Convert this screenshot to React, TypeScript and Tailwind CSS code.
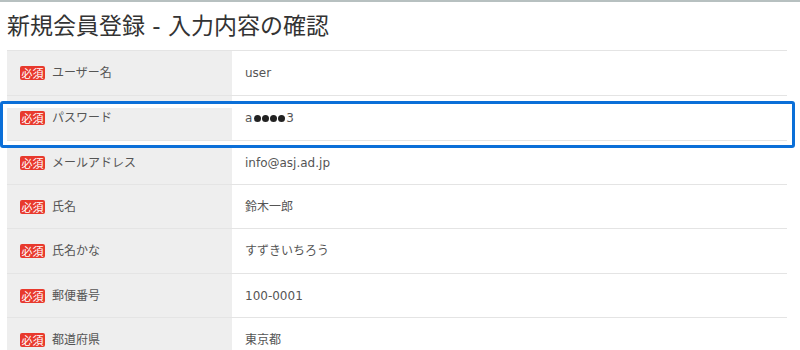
import React from "react";

const rows: { label: string; value: string; h: string }[] = [
  { label: "ユーザー名", value: "user", h: "h-[45px]" },
  { label: "パスワード", value: "pw", h: "h-[45px]" },
  { label: "メールアドレス", value: "info@asj.ad.jp", h: "h-[44px]" },
  { label: "氏名", value: "鈴木一郎", h: "h-[44px]" },
  { label: "氏名かな", value: "すずきいちろう", h: "h-[45px]" },
  { label: "郵便番号", value: "100-0001", h: "h-[44px]" },
  { label: "都道府県", value: "東京都", h: "h-[44px]" },
];

const FONT = '"DejaVu Sans", "Noto Sans CJK JP", sans-serif';

function Dot() {
  return <span className="inline-block w-[7px] h-[7px] rounded-full bg-[#222] mx-[0.5px]" />;
}

export default function App() {
  return (
    <div
      className="relative w-[800px] h-[350px] overflow-hidden bg-white border-t-2 border-[#b7c0c0]"
      style={{ fontFamily: FONT }}
    >
      <h1 className="ml-[7px] mt-[13px] mb-[13px] text-[23px] leading-[22px] text-[#333]">
        新規会員登録 - 入力内容の確認
      </h1>
      <div className="mx-[7px] w-[780px] border-t border-[#e4e4e4]">
        {rows.map((r, i) => (
          <div key={i} className={`flex ${r.h} border-b border-[#e4e4e4]`}>
            <div className="w-[225px] bg-[#eeeeee] flex items-center pl-[13px] gap-[7px]">
              <span
                className="w-[25px] h-[14px] rounded-[2px] bg-[#e8392d] text-white text-[11px] leading-[14px] flex items-center justify-center"
                style={{ fontFamily: '"Noto Sans CJK JP", sans-serif' }}
              >
                必須
              </span>
              <span className="text-[12px] text-[#555]">{r.label}</span>
            </div>
            <div className="flex-1 flex items-center pl-[13px] text-[12px] text-[#555]">
              {i === 1 ? (
                <span className="flex items-center">
                  a
                  <span className="flex items-center ml-[1px] mr-[1px]">
                    <Dot />
                    <Dot />
                    <Dot />
                    <Dot />
                  </span>
                  3
                </span>
              ) : (
                r.value
              )}
            </div>
          </div>
        ))}
      </div>
      <div className="absolute left-0 top-[99px] w-[795px] h-[47px] border-[3px] border-[#0b6fd8] rounded-[3px] shadow-[inset_0_0_0_4px_#ffffff]" />
    </div>
  );
}
